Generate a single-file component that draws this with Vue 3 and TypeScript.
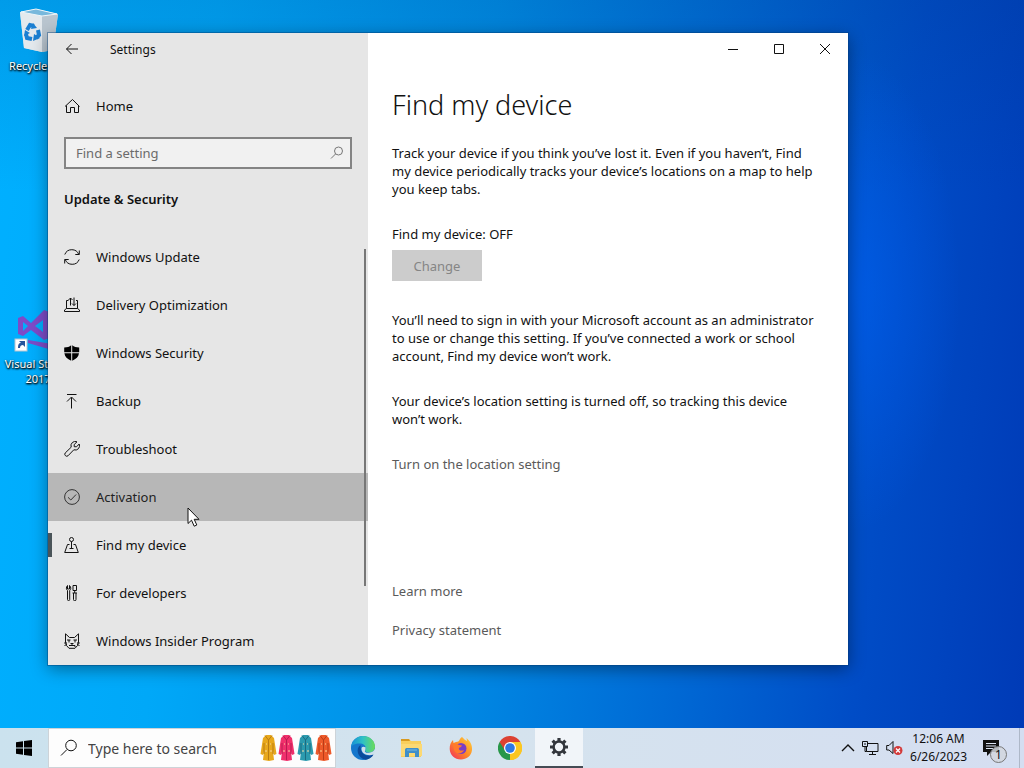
<script setup lang="ts">
import { ref } from 'vue'

interface NavItem {
  label: string
  icon: string
  solid?: boolean
  hovered?: boolean
  current?: boolean
}

const query = ref('')
const taskQuery = ref('')

const items: NavItem[] = [
  { label: 'Windows Update', icon: 'M.8 5.5A7.500 7.500 0 0 1 14.800 5.500M15.300 1.500V5.500h-4M15.200 10.500A7.500 7.500 0 0 1 1.200 10.500M.7 14.500V10.500h4' },
  { label: 'Delivery Optimization', icon: 'M4.500 3.500h-2v8h11v-8h-1.500M2.500 11.500L.5 13V14.500H15.500V13L13.500 11.500M6.500 8.500V1M4.500 3l2-2 2 2M10 .5V8.500M8 6.500l2 2 2-2' },
  { label: 'Windows Security', icon: 'M7.200 .3C5.500 1.800 3.300 2.500 .2 2.500V7.300H7.200ZM8.200 .3C10 1.800 12.200 2.500 15.200 2.500V7.300H8.200ZM.4 8.300H7.200V15.800C3.200 14 .9 11.800 .4 8.300ZM8.200 8.300H15C14.500 11.800 12.200 14 8.200 15.800Z', solid: true },
  { label: 'Backup', icon: 'M3 1.500h9.500M7.500 15.500V4.500M3 8.500l4.500-4.500 4.500 4.500' },
  { label: 'Troubleshoot', icon: 'M13 .8A4.300 4.300 0 0 0 7.200 6.200L1.200 12A2 2 0 0 0 4 14.800L9.800 8.800A4.300 4.300 0 0 0 15.200 3L12.500 5.800 10.200 5.700 10.200 3.500Z' },
  { label: 'Activation', icon: 'M8 .6a7.400 7.400 0 1 0 0 14.800a7.400 7.400 0 0 0 0-14.800M4 8.300l2.800 2.700 5.300-5.500', hovered: true },
  { label: 'Find my device', icon: 'M7.500 .5a2 2 0 1 0 0 4a2 2 0 0 0 0-4M7.500 4.500V11.500M5.500 7.500H3.500L.7 15.500H14.300L11.500 7.500H9.500M5.500 11.500H9.500', current: true },
  { label: 'For developers', icon: 'M3.500 .5V4H5.500V.5M3.500 .5C2 2 2 4.500 3.500 5.500V14.500A1 1 0 0 0 5.700 14.500V5.500C7.200 4.500 7.200 2 5.500 .5M9 .5H12.500V5.500H9ZM8.500 8H13M10.700 5.500V8M9.500 8V14.500A1.200 1.200 0 0 0 12 14.500V8' },
  { label: 'Windows Insider Program', icon: 'M1.500 9V.8L5.500 4.500H10.500L14.500 .8V9M1.500 9L2.500 12.500 5 15.300H11L13.500 12.500 14.500 9M3 7H6.500M9.500 7H13M.2 10H3M.5 12.500L3 11.500M15.800 10H13M15.500 12.500L13 11.500M5 7V9.500M11 7V9.500M6.500 10.500H9.500M8 10.500V12.500M5 12.500H11V14' },
]

const coats = [
  { x: 1, main: '#e8a81c', shade: '#b97c12' },
  { x: 19, main: '#f0306c', shade: '#b81c52' },
  { x: 38, main: '#2b9aae', shade: '#1c6b80' },
  { x: 56, main: '#ee5a2a', shade: '#b93c18' },
]
</script>

<template>
  <div class="screen">
    <div class="desktop">
      <div class="shortcuts">
        <div class="shortcut">
          <svg width="48" height="48" viewBox="0 0 48 48" aria-hidden="true">
            <path d="M6 4L22 1 44 6 39 42 28 44 10 40Z" fill="#d5dde4" />
            <path d="M6 4L28 8 28 44 10 40Z" fill="#e4e9ed" />
            <path d="M28 8L44 6 39 42 28 44Z" fill="#b9c5cf" />
            <path d="M7 4L22 1 43 6 28 8Z" fill="#78b8dc" stroke="#eef5f9" />
            <g fill="none" stroke="#1b7fd2" stroke-width="4">
              <path d="M13 22l3-5 4 1M24 22l1 5-3 3M18 31l-5-1-1-4" />
            </g>
            <path d="M19 15l4 5-6 1ZM26 30l-7 3 1-7ZM10 28l1-6 5 3Z" fill="#1b7fd2" />
          </svg>
          <span>Recycle Bin</span>
        </div>
        <div class="shortcut">
          <svg width="48" height="48" viewBox="0 0 48 48" aria-hidden="true">
            <path d="M4 12L9 10 17 17 30 4 38 7V31L30 34 17 24 9 30 4 28ZM9 16V25L14 20ZM29 14L21 20 29 26Z" fill="#7d4bc8" fill-rule="evenodd" />
            <path d="M14 34L38 38V44L14 37Z" fill="#7d4bc8" />
            <rect x="1" y="33" width="12" height="12" fill="#fff" stroke="#b8c4d0" />
            <path d="M4 42C4 38 5 37 7 37L5 35H11V41L9 39C7 39 6 40 6 42Z" fill="#26549c" />
          </svg>
          <span>Visual Studio<br />2017</span>
        </div>
      </div>

      <main class="window">
        <aside class="side">
          <header class="caption">
            <button class="back" aria-label="Back">
              <svg width="14" height="14" viewBox="0 0 14 14"><path d="M13 7H1.500M6.500 2L1.500 7l5 5" /></svg>
            </button>
            <span>Settings</span>
          </header>
          <a class="item home" href="#home">
            <svg width="16" height="16" viewBox="0 0 16 16"><path d="M2.500 7.500V14.500H6.500V9.500H10.500V14.500H14.500V7.500M1 8.500L8.500 1.500 15.500 8.500" /></svg>
            Home
          </a>
          <label class="find">
            <input v-model="query" type="text" placeholder="Find a setting" aria-label="Find a setting" />
            <svg width="14" height="14" viewBox="0 0 14 14"><circle cx="8.500" cy="5" r="4" /><path d="M5.500 8L1 12.500" /></svg>
          </label>
          <h2>Update &amp; Security</h2>
          <nav>
            <a v-for="item in items" :key="item.label" class="item" :class="{ hovered: item.hovered, current: item.current }" href="#">
              <svg width="16" height="16" viewBox="0 0 16 16" :class="{ solid: item.solid }"><path :d="item.icon" /></svg>
              {{ item.label }}
            </a>
            <span class="thumb"></span>
          </nav>
        </aside>

        <section class="body">
          <div class="controls">
            <button aria-label="Minimize"><svg width="12" height="12" viewBox="0 0 12 12"><path d="M1 6.500H11" /></svg></button>
            <button aria-label="Maximize"><svg width="12" height="12" viewBox="0 0 12 12"><path d="M1.500 1.500H10.500V10.500H1.500Z" /></svg></button>
            <button aria-label="Close"><svg width="12" height="12" viewBox="0 0 12 12"><path d="M1 1L11 11M11 1L1 11" /></svg></button>
          </div>
          <div class="content">
            <h1>Find my device</h1>
            <p>Track your device if you think you’ve lost it. Even if you haven’t, Find my device periodically tracks your device’s locations on a map to help you keep tabs.</p>
            <p class="state">Find my device: OFF</p>
            <button class="change" disabled>Change</button>
            <p>You’ll need to sign in with your Microsoft account as an administrator to use or change this setting. If you’ve connected a work or school account, Find my device won’t work.</p>
            <p>Your device’s location setting is turned off, so tracking this device won’t work.</p>
            <a href="#location">Turn on the location setting</a>
            <div class="more">
              <a href="#learn">Learn more</a>
              <a href="#privacy">Privacy statement</a>
            </div>
          </div>
        </section>
      </main>

      <svg class="pointer" width="14" height="21" viewBox="0 0 14 21" aria-hidden="true">
        <path d="M1 1V16.500L4.500 13.200 7.200 19.200 9.800 18 7.200 12.300H12Z" fill="#fff" stroke="#111" />
      </svg>
    </div>

    <footer class="taskbar">
      <button class="start" aria-label="Start">
        <svg width="16" height="16" viewBox="0 0 16 16"><path d="M0 2.200L7 1.200V7.500H0ZM8 1L16 0V7.500H8ZM0 8.500H7V14.800L0 13.800ZM8 8.500H16V16L8 15Z" /></svg>
      </button>
      <label class="search">
        <svg width="18" height="18" viewBox="0 0 18 18" class="line"><circle cx="11" cy="6.500" r="5.300" /><path d="M7 10.500L1 16.500" /></svg>
        <input v-model="taskQuery" type="text" placeholder="Type here to search" aria-label="Type here to search" />
        <svg width="73" height="28" viewBox="0 0 73 28" aria-hidden="true">
          <g v-for="coat in coats" :key="coat.x" :transform="`translate(${coat.x} 0)`">
            <path d="M6 1H11L14 4 16.500 20 14 21 13 17 14 26 9 27 3 26 4 17 3 21 .5 20 3 4Z" :fill="coat.main" />
            <path d="M5 1.500L8.500 6 12 1.500M8.500 6V26M4 9V20M13 9V20" fill="none" :stroke="coat.shade" />
            <path d="M5 17h2M10 17h2M6 10h1M10 10h1" stroke="#f7d9a0" />
          </g>
        </svg>
      </label>
      <div class="apps">
        <button aria-label="Microsoft Edge">
          <svg width="24" height="24" viewBox="0 0 24 24">
            <defs>
              <linearGradient id="edgeTop" x1="0" x2="1"><stop offset="0" stop-color="#168fd6" /><stop offset=".5" stop-color="#2fc2c4" /><stop offset="1" stop-color="#6bdc58" /></linearGradient>
            </defs>
            <circle cx="12" cy="12" r="12" fill="#1577cc" />
            <path d="M0 11C1 4 6 0 12 0C19 0 24 5 24 10.500C24 14.500 21 16.500 18 16.500C15 16.500 13.500 15.200 14.300 14C15.500 12 14.500 8 9.500 7.500C5 7 1 9 0 11Z" fill="url(#edgeTop)" />
            <path d="M9.500 9C4.500 12 6 22 14.500 23.700C18.500 23.500 21.500 20.500 22.500 18.500C16 21.500 9 18.500 9.500 9Z" fill="#0b4b9b" />
            <path d="M14.300 14C13 16 15 17 18 16.800C21 16.500 23 15 24 12.500V17L22.500 18.500C17 20.500 10.500 18 10.500 13C10.500 11 12 10 14.700 11.500Z" fill="#cfe0eb" />
          </svg>
        </button>
        <button aria-label="File Explorer">
          <svg width="24" height="24" viewBox="0 0 24 24">
            <path d="M1 3H9L11 5H21V21H1Z" fill="#f9cf5c" />
            <path d="M1 3H9L10 5H1Z" fill="#d99a20" />
            <path d="M1 8H22V20H1Z" fill="#fcd973" />
            <path d="M5 21V14C5 12.500 6 12 7 12H17C18 12 19 12.500 19 14V21H15V17H9V21Z" fill="#3f8fc9" />
            <path d="M7 14H17" stroke="#76b9e2" />
          </svg>
        </button>
        <button aria-label="Firefox">
          <svg width="24" height="24" viewBox="0 0 24 24">
            <defs>
              <linearGradient id="fox" x1="1" y1="0" x2="0" y2="1"><stop offset="0" stop-color="#ffd63e" /><stop offset=".5" stop-color="#ff8a25" /><stop offset="1" stop-color="#f02860" /></linearGradient>
            </defs>
            <path d="M13 1C15 3 16 4 18 5C18 4 17.500 3 17.500 2C21 5 23.500 9 23 14C22.300 20 17.500 23.500 12 23.500C5.500 23.500 1 19 .7 13C.5 9 2 6 4 4L4.500 7L7 6C9 6 10 5 10.500 4C11 2.500 12 1.500 13 1Z" fill="url(#fox)" />
            <circle cx="12" cy="12.500" r="5.500" fill="#7a3dc5" />
            <path d="M4 9C6 7 8 7.500 10 9L13 9.500C12.500 11.500 10.500 11 10 12C9 14 12 15.500 15 14C13.500 18 7 19 5 14Z" fill="#ff7a2c" />
          </svg>
        </button>
        <button aria-label="Google Chrome">
          <svg width="24" height="24" viewBox="0 0 24 24">
            <path d="M12 12V0L22.400 6A12 12 0 0 1 12 24Z" fill="#fbc621" />
            <path d="M12 12L12 24A12 12 0 0 1 1.600 6Z" fill="#28974a" />
            <path d="M1.600 6A12 12 0 0 1 22.400 6H12L7 14.500Z" fill="#dc4132" />
            <path d="M22.400 6A12 12 0 0 1 12 24L17.500 14.500V6Z" fill="#fbc621" />
            <circle cx="12" cy="12" r="6" fill="#fff" /><circle cx="12" cy="12" r="4.800" fill="#2d78e4" />
          </svg>
        </button>
        <button class="active" aria-label="Settings">
          <svg width="20" height="20" viewBox="0 0 20 20">
            <g fill="none" stroke="#33373d">
              <circle cx="10" cy="10" r="5.400" stroke-width="2.500" />
              <path d="M10 1V4.500M10 15.500V19M1 10H4.500M15.500 10H19M3.600 3.600L6.100 6.100M13.900 13.900L16.400 16.400M16.400 3.600L13.900 6.100M6.100 13.900L3.600 16.400" stroke-width="3.200" />
            </g>
          </svg>
        </button>
      </div>
      <div class="tray">
        <button aria-label="Show hidden icons"><svg width="14" height="14" viewBox="0 0 14 14" class="line"><path d="M1 10L7 4l6 6" stroke-width="1.400" /></svg></button>
        <button aria-label="Network">
          <svg width="17" height="16" viewBox="0 0 17 16" class="line"><path d="M6 3.500H16V11.500H4.500V7M10.500 11.500V14.500M7 14.500H14M.5 1.500H5.500V6.500H.5ZM3 6.500V11.500H4.500M2 4H4" /></svg>
        </button>
        <button aria-label="Volume muted">
          <svg width="17" height="16" viewBox="0 0 17 16"><path d="M.7 5.500H3L7 1.500V13.500L3 10H.7Z" fill="none" stroke="#111" /><circle cx="12" cy="10.500" r="4.500" fill="#d33a3a" /><path d="M10 8.500l4 4M14 8.500l-4 4" stroke="#fff" stroke-width="1.300" /></svg>
        </button>
        <button class="clock"><span>12:06 AM</span><span>6/26/2023</span></button>
        <button class="notes" aria-label="Notifications, 1 new">
          <svg width="17" height="17" viewBox="0 0 17 17"><path d="M0 0H16V12H8L4 16V12H0Z" fill="#111" /><path d="M3 3.500H13M3 6H13M3 8.500H10" stroke="#dce4f2" /></svg>
          <span class="badge">1</span>
        </button>
        <span class="peek"></span>
      </div>
    </footer>
  </div>
</template>

<style>
html, body { margin: 0; height: 100%; overflow: hidden; }
#app { height: 100%; }
</style>

<style scoped>
* { box-sizing: border-box; }
.screen {
  height: 100%;
  display: flex;
  flex-direction: column;
  font-family: "Noto Sans", "Open Sans", sans-serif;
  font-size: 13px;
  color: #111;
  background:
    radial-gradient(ellipse 110px 240px at 83% 38%, rgba(0, 96, 244, 0.6), rgba(0, 90, 235, 0) 100%),
    linear-gradient(180deg, rgba(0, 50, 120, 0.16), rgba(0, 50, 120, 0) 25%),
    linear-gradient(96deg, #00b0ff 0%, #00a8f8 20%, #008ee6 45%, #0068d4 68%, #004cc6 84%, #003ab6 100%);
}
button, input { font: inherit; color: inherit; border: 0; padding: 0; margin: 0; background: none; border-radius: 0; outline: 0; }
a { color: inherit; text-decoration: none; }
svg { display: block; flex: none; }
.desktop { position: relative; flex: 1; min-height: 0; }
.shortcuts { display: flex; flex-direction: column; gap: 233px; width: 76px; padding-top: 8px; }
.shortcut { display: flex; flex-direction: column; align-items: center; gap: 2px; color: #fff; font-size: 11px; line-height: 15px; text-align: center; white-space: nowrap; text-shadow: 1px 1px 2px #000, 0 1px 2px #000; }
.window {
  position: absolute;
  inset: 33px 176px 63px 48px;
  display: flex;
  overflow: hidden;
  background: #fff;
  box-shadow: 0 0 0 1px rgba(0, 60, 120, 0.4), 0 4px 16px rgba(0, 0, 0, 0.4);
}
.side { width: 40%; display: flex; flex-direction: column; background: #e6e6e6; }
.side svg, .controls svg, .line { fill: none; stroke: #111; }
.side svg.solid { fill: #000; stroke: none; }
.caption { height: 32px; flex: none; display: flex; align-items: center; font-size: 12px; }
.back { width: 48px; height: 32px; display: grid; place-items: center; }
.caption span { padding-left: 14px; }
.item { position: relative; display: flex; align-items: center; gap: 16px; height: 48px; flex: none; padding: 0 16px; }
.home { margin-top: 17px; }
.find { display: flex; align-items: center; flex: none; margin: 7px 16px 0; height: 32px; padding: 0 6px 0 10px; border: 2px solid #848484; background: #f1f1f1; }
.find input { flex: 1; min-width: 0; }
.find svg { stroke: #777; }
input::placeholder { color: #6b6b6b; opacity: 1; }
h2 { margin: 20px 16px 24px; font-size: 13px; line-height: 20px; font-weight: 600; }
nav { position: relative; flex: 1; min-height: 0; overflow: hidden; }
.hovered { background: #b7b7b7; color: #222; }
.side .hovered svg { stroke: #333; }
.current::before { content: ""; position: absolute; left: 0; top: 12px; width: 4px; height: 24px; background: #4a5459; }
.thumb { position: absolute; right: 2px; top: 16px; width: 2px; height: 78%; background: #777; }
.body { flex: 1; display: flex; flex-direction: column; min-width: 0; }
.controls { display: flex; justify-content: flex-end; height: 32px; }
.controls button { width: 46px; display: grid; place-items: center; }
.content { display: flex; flex-direction: column; align-items: flex-start; padding: 22px 28px 0 24px; line-height: 18px; }
h1 { margin: 0 0 21px; font-size: 27px; line-height: 36px; font-weight: 300; }
p { margin: 0 0 27px; }
.state { margin: 0 0 7px; }
.change { width: 90px; height: 31px; margin-bottom: 30px; background: #ccc; color: #858585; }
.content a { color: #5a5a5a; }
.more { display: flex; flex-direction: column; gap: 21px; margin-top: 109px; }
.pointer { position: absolute; left: 187px; top: 507px; }
.taskbar { display: flex; flex: none; height: 40px; background: linear-gradient(90deg, #cbe2ee, #d5e3ee 50%, #d5def1); }
.start { width: 48px; display: grid; place-items: center; }
.search { width: 288px; display: flex; align-items: center; padding: 0 3px 0 11px; background: #fdfdfd; border: 1px solid #cdd3d8; font-size: 14px; }
.search input { flex: 1; min-width: 0; margin-left: 10px; }
.search input::placeholder { color: #444; }
.apps { display: flex; padding-left: 3px; gap: 1px; }
.apps button { width: 48px; display: grid; place-items: center; }
.apps .active { background: #f1f5f9; border-bottom: 2px solid #454c55; }
.tray { margin-left: auto; display: flex; align-items: center; font-size: 12px; }
.tray > button { margin-right: 7px; }
.clock { display: flex; flex-direction: column; align-items: center; line-height: 18px; }
.tray .clock { margin-right: 16px; }
.notes { position: relative; width: 25px; }
.badge { position: absolute; left: 7px; top: 6px; width: 17px; height: 17px; border: 1px solid #777; border-radius: 50%; background: rgba(210, 215, 222, 0.85); line-height: 15px; font-size: 12px; text-align: center; }
.tray .notes { margin-right: 11px; }
.peek { width: 5px; height: 40px; border-left: 1px solid #aeb8c8; }
</style>
